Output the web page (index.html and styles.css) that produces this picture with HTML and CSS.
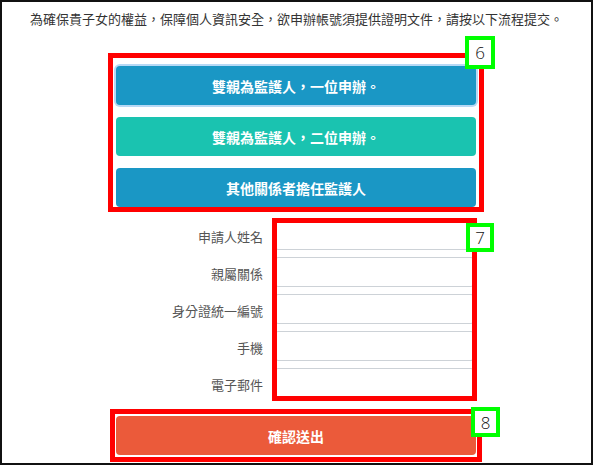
FILE: index.html
```html
<!DOCTYPE html>
<html lang="zh-Hant">
<head>
  <meta charset="UTF-8">
  <title>申辦帳號</title>
  <link rel="stylesheet" href="styles.css">
</head>
<body>
  <div class="frame">
    <p class="intro">為確保貴子女的權益，保障個人資訊安全，欲申辦帳號須提供證明文件，請按以下流程提交。</p>

    <div class="choices">
      <button class="btn btn-blue focused">雙親為監護人，一位申辦。</button>
      <button class="btn btn-teal">雙親為監護人，二位申辦。</button>
      <button class="btn btn-blue">其他關係者擔任監護人</button>
      <div class="mark mark-choices"></div>
      <div class="badge badge-6">6</div>
    </div>

    <div class="form">
      <div class="labels">
        <label for="name">申請人姓名</label>
        <label for="relation">親屬關係</label>
        <label for="idno">身分證統一編號</label>
        <label for="mobile">手機</label>
        <label for="email">電子郵件</label>
      </div>
      <div class="inputs">
        <input type="text" id="name">
        <input type="text" id="relation">
        <input type="text" id="idno">
        <input type="text" id="mobile">
        <input type="text" id="email">
        <div class="mark mark-inputs"></div>
        <div class="badge badge-7">7</div>
      </div>
    </div>

    <div class="submit">
      <button class="btn btn-orange">確認送出</button>
      <div class="mark mark-submit"></div>
      <div class="badge badge-8">8</div>
    </div>
  </div>
</body>
</html>
```

FILE: styles.css
```css
body {
  margin: 0;
  background: #fff;
  font-family: "Noto Sans CJK TC", "Liberation Sans", sans-serif;
}
.frame {
  box-sizing: border-box;
  width: 593px;
  height: 465px;
  border: 2px solid #111;
  padding-top: 8px;
}
.intro {
  margin: 0;
  font-size: 13px;
  line-height: 18px;
  color: #333;
  text-align: center;
}
.choices {
  position: relative;
  width: 360px;
  margin: 38px auto 0 114px;
  display: flex;
  flex-direction: column;
  gap: 12px;
}
.btn {
  display: block;
  width: 100%;
  height: 39px;
  padding: 0;
  border: none;
  border-radius: 4px;
  color: #fff;
  font-family: "Noto Sans CJK TC", "Liberation Sans", sans-serif;
  font-size: 14px;
  font-weight: bold;
  cursor: pointer;
}
.btn-blue {
  background-color: #1a97c5;
}
.btn-teal {
  background-color: #1ac3b0;
}
.btn-orange {
  background-color: #eb5a3a;
}
.focused {
  box-shadow: 0 0 0 2px #b7d9f5;
}
.mark {
  position: absolute;
  border: 5px solid #ff0000;
  box-sizing: border-box;
  pointer-events: none;
}
.mark-choices {
  top: -13px;
  left: -8px;
  width: 376px;
  height: 159px;
}
.badge {
  position: absolute;
  box-sizing: border-box;
  border: 4px solid #00ff00;
  background: #fff;
  color: #111;
  font-family: "Open Sans", "Liberation Sans", sans-serif;
  font-size: 17px;
  font-weight: 300;
  display: flex;
  align-items: center;
  justify-content: center;
}
.badge-6 {
  left: 349px;
  top: -30px;
  width: 30px;
  height: 33px;
}
.form {
  display: flex;
  gap: 12px;
  margin: 13px 0 0 114px;
}
.labels {
  width: 147px;
  display: flex;
  flex-direction: column;
  gap: 7px;
}
.labels label {
  display: block;
  height: 30px;
  line-height: 30px;
  padding-top: 2px;
  box-sizing: border-box;
  text-align: right;
  font-size: 13px;
  color: #555;
}
.inputs {
  position: relative;
  width: 199px;
  display: flex;
  flex-direction: column;
  gap: 7px;
}
.inputs input {
  box-sizing: border-box;
  height: 30px;
  width: 100%;
  margin: 0;
  border: 1px solid #cdd2d7;
  border-radius: 3px;
  background: #fff;
}
.mark-inputs {
  top: -2px;
  left: -3px;
  width: 205px;
  height: 183px;
}
.badge-7 {
  left: 191px;
  top: 3px;
  width: 28px;
  height: 29px;
}
.submit {
  position: relative;
  width: 360px;
  margin: 18px 0 0 114px;
}
.mark-submit {
  top: -7px;
  left: -6px;
  width: 372px;
  height: 53px;
}
.badge-8 {
  left: 355px;
  top: -9px;
  width: 29px;
  height: 30px;
}
```
